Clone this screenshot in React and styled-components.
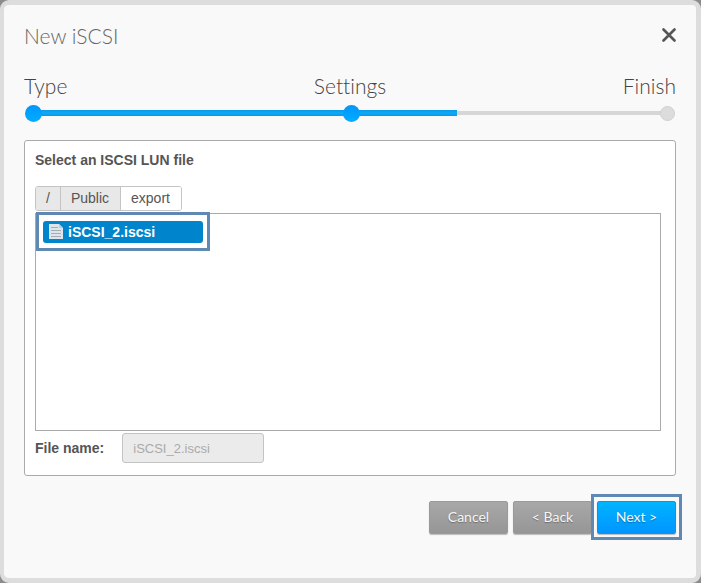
import React, { useState } from "react";

import styled, { createGlobalStyle, css } from "styled-components";

const GlobalStyle = createGlobalStyle`
  * {
    box-sizing: border-box;
  }
  body {
    margin: 0;
    background: #8c8c8c;
    color: #555;
    font-family: "Liberation Sans", Arial, sans-serif;
    font-size: 14px;
  }
`;

const Dialog = styled.section`
  display: flex;
  flex-direction: column;
  min-height: 100vh;
  padding: 19px 20px 44px;
  background: #f9f9f9;
  border: 5px solid #ddd;
  border-left-width: 4px;
  border-radius: 9px;
`;

const Header = styled.header`
  display: flex;
  align-items: flex-start;
  justify-content: space-between;
  height: 24px;
`;

const Title = styled.h1`
  margin: 0;
  color: #666;
  font: 300 21px/24px Lato, sans-serif;
`;

const CloseButton = styled.button`
  display: flex;
  padding: 4px 0;
  background: none;
  border: 0;
  color: #555;
  cursor: pointer;
`;

const Steps = styled.ol`
  display: flex;
  justify-content: space-between;
  margin: 25px 0 0;
  padding: 0;
  list-style: none;
`;

const Step = styled.li`
  flex: 1;
  color: #444;
  font: 300 21px/26px Lato, sans-serif;
  font-variant-ligatures: none;
  text-align: ${props => props.$align};
`;

const Track = styled.div`
  position: relative;
  display: flex;
  align-items: center;
  justify-content: space-between;
  height: 18px;
  margin-top: 5px;
  padding: 0 1px;

  &::before,
  &::after {
    content: "";
    position: absolute;
    left: 8px;
  }
  &::before {
    right: 8px;
    height: 4px;
    background: #d6d6d6;
  }
  &::after {
    right: calc(100% / 3 + 2px);
    height: 6px;
    background: linear-gradient(#0b98e4, #0eaaf8 50%, #0b98e4);
  }
`;

const Dot = styled.span`
  z-index: 1;
  width: 17px;
  height: 17px;
  border-radius: 50%;
  background: linear-gradient(#0095ff, #00aeff);

  ${props =>
    !props.$done &&
    css`
      width: 15px;
      height: 15px;
      background: #dcdcdc;
      border: 1px solid #d0d0d0;
    `}
`;

const Panel = styled.div`
  display: flex;
  flex: 1;
  flex-direction: column;
  margin-top: 18px;
  padding: 10px 14px 12px 10px;
  background: #fff;
  border: 1px solid #aaa;
  border-radius: 3px;
`;

const PanelTitle = styled.h2`
  margin: 0;
  font-size: 14px;
  line-height: 18px;
`;

const Crumbs = styled.nav`
  display: flex;
  align-self: flex-start;
  margin: 17px 0 2px;
  border: 1px solid #c4c4c4;
  border-radius: 3px;
  overflow: hidden;
`;

const Crumb = styled.a`
  padding: 0 10px;
  background: ${props => (props.$current ? "#fff" : "#e8e8e8")};
  color: #555;
  line-height: 23px;
  text-decoration: none;

  & + & {
    padding-right: 11px;
    border-left: 1px solid #c4c4c4;
  }
`;

const FileList = styled.div`
  flex: 1;
  padding: 7px;
  border: 1px solid #aaa;
`;

const FileItem = styled.button`
  position: relative;
  display: flex;
  align-items: center;
  gap: 5px;
  width: 160px;
  height: 22px;
  padding: 0 6px;
  background: #0084cc;
  border: 0;
  border-radius: 3px;
  color: #fff;
  font: bold 14px/22px "Liberation Sans", Arial, sans-serif;
  cursor: pointer;

  &::after {
    content: "";
    position: absolute;
    inset: -9px -7px -8px;
    border: 3px solid #5f88b2;
  }
`;

const FileName = styled.div`
  display: flex;
  align-items: center;
  gap: 18px;
  margin-top: 2px;
`;

const Label = styled.label`
  font-weight: bold;
`;

const TextInput = styled.input`
  width: 142px;
  height: 30px;
  padding: 0 10px;
  background: #ebebeb;
  border: 1px solid #c4c4c4;
  border-radius: 3px;
  color: #aaa;
  font: 13px "Liberation Sans", Arial, sans-serif;
`;

const Footer = styled.footer`
  display: flex;
  justify-content: flex-end;
  gap: 5px;
  margin-top: 25px;
`;

const Button = styled.button`
  width: 79px;
  height: 33px;
  padding: 0 0 2px;
  background: linear-gradient(#a8a8a8, #969696);
  border: 1px solid #9a9a9a;
  border-radius: 2px;
  box-shadow: 0 1px 1px #bbb;
  color: #f5f5f5;
  font: 14px/28px Lato, sans-serif;
  text-shadow: 0 1px 1px rgba(0, 0, 0, 0.3);
  cursor: pointer;
`;

const NextFrame = styled.div`
  position: relative;
  display: flex;

  /* focus frame, lies over the edge of the button before it */
  &::before {
    content: "";
    position: absolute;
    inset: -7px -6px -6px;
    background: #f9f9f9;
    border: 3px solid #5f88b2;
  }
`;

const NextButton = styled(Button)`
  z-index: 1;
  background: linear-gradient(#00b4ff, #0095ff);
  border-color: #0a96e6;
`;

const CloseIcon = () => (
  <svg width="14" height="14" viewBox="0 0 14 14" aria-hidden="true">
    <path
      d="M1.5 1.5l11 11M12.5 1.5l-11 11"
      stroke="currentColor"
      strokeWidth="2.6"
      strokeLinecap="round"
    />
  </svg>
);

const FileIcon = () => (
  <svg width="14" height="16" viewBox="0 0 14 16" aria-hidden="true">
    <path d="M0 0h10l4 4v11H0z" fill="#dde4ea" />
    <path d="M10 0v4h4z" fill="#b9cfe0" />
    <path d="M2 3.5h7M2 6.500h10M2 9.500h10M2 12.500h10" stroke="#a3adb8" />
  </svg>
);

const steps = [
  { name: "Type", align: "left", done: true },
  { name: "Settings", align: "center", done: true },
  { name: "Finish", align: "right", done: false }
];

const App = () => {
  const [file] = useState("iSCSI_2.iscsi");

  return (
    <>
      <GlobalStyle />
      <Dialog role="dialog" aria-labelledby="title">
        <Header>
          <Title id="title">New iSCSI</Title>
          <CloseButton aria-label="Close">
            <CloseIcon />
          </CloseButton>
        </Header>
        <Steps>
          {steps.map(step => (
            <Step key={step.name} $align={step.align}>
              {step.name}
            </Step>
          ))}
        </Steps>
        <Track>
          {steps.map(step => (
            <Dot key={step.name} $done={step.done} />
          ))}
        </Track>
        <Panel>
          <PanelTitle>Select an ISCSI LUN file</PanelTitle>
          <Crumbs>
            <Crumb href="#root">/</Crumb>
            <Crumb href="#public">Public</Crumb>
            <Crumb href="#export" $current>
              export
            </Crumb>
          </Crumbs>
          <FileList>
            <FileItem>
              <FileIcon />
              {file}
            </FileItem>
          </FileList>
          <FileName>
            <Label htmlFor="filename">File name:</Label>
            <TextInput id="filename" value={file} disabled />
          </FileName>
        </Panel>
        <Footer>
          <Button>Cancel</Button>
          <Button>&lt; Back</Button>
          <NextFrame>
            <NextButton>Next &gt;</NextButton>
          </NextFrame>
        </Footer>
      </Dialog>
    </>
  );
};

export default App;
